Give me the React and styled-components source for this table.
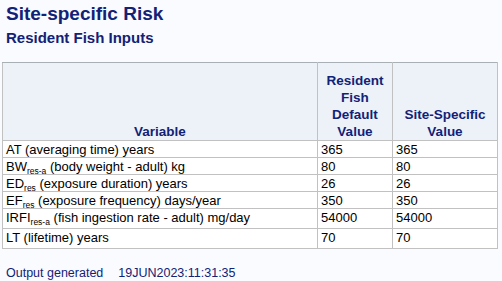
import React from "react";
import styled, { createGlobalStyle } from "styled-components";

const Global = createGlobalStyle`
  html, body { margin: 0; padding: 0; background: #fafbfe; }
  body { font-family: Arial, "Liberation Sans", Helvetica, sans-serif; }
`;

const Page = styled.div`
  width: 502px;
  height: 281px;
  overflow: hidden;
  background: #fafbfe;
  padding: 3px 0 0 2px;
  box-sizing: border-box;
`;

const Title = styled.h1`
  margin: 0 0 0 4px;
  font-size: 19px;
  line-height: 22px;
  font-weight: bold;
  color: #112277;
`;

const SubTitle = styled.h2`
  margin: 4px 0 0 4px;
  font-size: 15px;
  line-height: 17px;
  font-weight: bold;
  color: #112277;
`;

const Table = styled.table`
  margin-top: 16px;
  width: 495px;
  table-layout: fixed;
  border-collapse: collapse;
  border: 1px solid #a9b0b5;
  font-size: 13px;
`;

const HeadCell = styled.th`
  background: #edf2f9;
  color: #112277;
  font-weight: bold;
  font-size: 13.5px;
  line-height: 17px;
  text-align: center;
  vertical-align: bottom;
  padding: 9px 3px 0;
  border: 1px solid #c1c1c1;
  border-top-color: #a9b0b5;
`;

const Row = styled.tr`
  height: ${(p) => p.$h}px;
`;

const Cell = styled.td`
  background: #ffffff;
  color: #000000;
  font-size: 13px;
  line-height: 15px;
  vertical-align: top;
  padding: 1px 3px 0;
  border: 1px solid #c1c1c1;
  white-space: nowrap;
  overflow: hidden;
`;

const Sub = styled.span`
  font-size: 8.5px;
  line-height: 0;
  position: relative;
  top: 3px;
`;

const Footer = styled.div`
  margin: 17px 0 0 4px;
  display: flex;
  gap: 15px;
  color: #112277;
  font-size: 12.5px;
  line-height: 15px;
`;

const rows = [
  { h: 16, label: <>AT (averaging time) years</>, d: "365", s: "365" },
  { h: 16, label: <>BW<Sub>res-a</Sub> (body weight - adult) kg</>, d: "80", s: "80" },
  { h: 17, label: <>ED<Sub>res</Sub> (exposure duration) years</>, d: "26", s: "26" },
  { h: 17, label: <>EF<Sub>res</Sub> (exposure frequency) days/year</>, d: "350", s: "350" },
  { h: 20, label: <>IRFI<Sub>res-a</Sub> (fish ingestion rate - adult) mg/day</>, d: "54000", s: "54000" },
  { h: 20, label: <>LT (lifetime) years</>, d: "70", s: "70" },
];

export default function App() {
  return (
    <>
      <Global />
      <Page>
        <Title>Site-specific Risk</Title>
        <SubTitle>Resident Fish Inputs</SubTitle>
        <Table>
          <colgroup>
            <col style={{ width: 315 }} />
            <col style={{ width: 75 }} />
            <col style={{ width: 105 }} />
          </colgroup>
          <thead>
            <tr>
              <HeadCell>Variable</HeadCell>
              <HeadCell>Resident Fish Default Value</HeadCell>
              <HeadCell>Site-Specific Value</HeadCell>
            </tr>
          </thead>
          <tbody>
            {rows.map((r, i) => (
              <Row key={i} $h={r.h}>
                <Cell>{r.label}</Cell>
                <Cell>{r.d}</Cell>
                <Cell>{r.s}</Cell>
              </Row>
            ))}
          </tbody>
        </Table>
        <Footer>
          <span>Output generated</span>
          <span>19JUN2023:11:31:35</span>
        </Footer>
      </Page>
    </>
  );
}
